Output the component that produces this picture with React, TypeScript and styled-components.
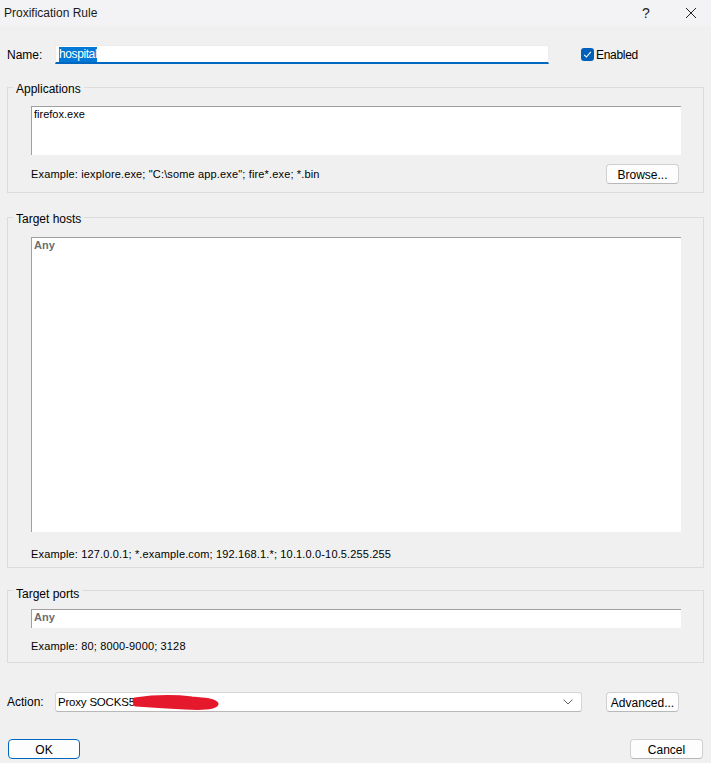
import React from "react";
import styled, { createGlobalStyle } from "styled-components";

const Global = createGlobalStyle`
  html, body { margin: 0; padding: 0; background: #f0f0f0; }
  body { font-family: "Liberation Sans", Arial, sans-serif; color: #000; }
`;

const Window = styled.div`
  width: 711px;
  height: 763px;
  background: #f0f0f0;
  display: flex;
  flex-direction: column;
  overflow: hidden;
`;

const TitleBar = styled.div`
  height: 26px;
  flex: none;
  background: #f3f3f5;
  display: flex;
  align-items: center;
  padding-left: 4px;
`;

const Title = styled.div`
  font-size: 12px;
  flex: 1;
  color: #1a1a1a;
`;

const TitleButton = styled.div<{ $w: number }>`
  width: ${(p) => p.$w}px;
  height: 26px;
  display: flex;
  align-items: center;
  justify-content: center;
  font-size: 14px;
  color: #222;
`;

const Body = styled.div`
  padding: 0 7px;
  display: flex;
  flex-direction: column;
`;

const NameRow = styled.div`
  margin-top: 19px;
  height: 19px;
  display: flex;
  align-items: center;
`;

const Label = styled.div`
  width: 48px;
  font-size: 12px;
  flex: none;
`;

const NameInput = styled.div`
  width: 494px;
  height: 19px;
  box-sizing: border-box;
  background: #fff;
  border: 1px solid #ececec;
  border-bottom: 2px solid #0067c0;
  padding-left: 3px;
  display: flex;
  align-items: center;
  font-size: 12px;
`;

const Selected = styled.span`
  background: #0078d7;
  color: #fff;
  line-height: 15px;
  letter-spacing: -0.4px;
`;

const CheckLabel = styled.label`
  margin-left: 32px;
  display: flex;
  align-items: center;
  gap: 2px;
  font-size: 12px;
  letter-spacing: -0.3px;
`;

const CheckBox = styled.span`
  width: 13px;
  height: 13px;
  border-radius: 3px;
  background: #005fb8;
  display: flex;
  align-items: center;
  justify-content: center;
`;

const Group = styled.fieldset<{ $top: number }>`
  margin: ${(p) => p.$top}px 0 0 0;
  padding: 0 22px 0 5px;
  border: 1px solid #dcdcdc;
  min-width: 0;
`;

const Legend = styled.legend<{ $drop: number }>`
  padding: ${(p) => p.$drop}px 3px 0 3px;
  font-size: 12px;
  line-height: 14px;
`;

const GroupContent = styled.div<{ $pt: number; $pb: number }>`
  padding: ${(p) => p.$pt}px 0 ${(p) => p.$pb}px 18px;
  display: flex;
  flex-direction: column;
`;

const TextBox = styled.div<{ $h: number }>`
  height: ${(p) => p.$h}px;
  box-sizing: border-box;
  background: #fff;
  border-top: 1px solid #a0a0a0;
  border-left: 1px solid #a0a0a0;
  padding: 1px 2px;
  font-size: 11px;
  line-height: 13px;
`;

const Placeholder = styled.span`
  font-weight: bold;
  color: #6d6d6d;
`;

const ExampleRow = styled.div<{ $mt: number; $h: number }>`
  margin-top: ${(p) => p.$mt}px;
  height: ${(p) => p.$h}px;
  display: flex;
  align-items: center;
  justify-content: space-between;
  padding-right: 2px;
`;

const Example = styled.div`
  font-size: 11px;
  line-height: 14px;
  letter-spacing: 0.15px;
`;

const Button = styled.button<{ $w: number; $primary?: boolean }>`
  width: ${(p) => p.$w}px;
  height: 20px;
  box-sizing: border-box;
  padding: 1px 0 0 0;
  background: #fdfdfd;
  border: 1px solid ${(p) => (p.$primary ? "#0067c0" : "#d0d0d0")};
  border-bottom-color: ${(p) => (p.$primary ? "#0067c0" : "#b8b8b8")};
  border-radius: 4px;
  font-family: "Liberation Sans", Arial, sans-serif;
  font-size: 12px;
  color: #000;
`;

const ActionRow = styled.div`
  margin-top: 29px;
  height: 20px;
  display: flex;
  align-items: center;
`;

const Select = styled.div`
  position: relative;
  width: 527px;
  height: 20px;
  box-sizing: border-box;
  background: #fff;
  border: 1px solid #d6d6d6;
  border-bottom-color: #b8b8b8;
  border-radius: 3px;
  display: flex;
  align-items: center;
  padding: 0 8px 0 2px;
  font-size: 11.5px;
  letter-spacing: -0.2px;
  margin-right: 24px;
`;

const SelectText = styled.span`
  flex: 1;
`;

const Scribble = styled.svg`
  position: absolute;
  left: 74px;
  top: 1px;
`;

const Footer = styled.div`
  margin-top: 27px;
  display: flex;
  justify-content: space-between;
  padding: 0 1px;
`;

export default function App() {
  return (
    <>
      <Global />
      <Window>
        <TitleBar>
          <Title>Proxification Rule</Title>
          <TitleButton $w={50}>?</TitleButton>
          <TitleButton $w={40}>
            <svg width="12" height="12" viewBox="0 0 12 12">
              <path d="M1 1 L11 11 M11 1 L1 11" stroke="#222" strokeWidth="1" fill="none" />
            </svg>
          </TitleButton>
        </TitleBar>
        <Body>
          <NameRow>
            <Label>Name:</Label>
            <NameInput>
              <Selected>hospital</Selected>
            </NameInput>
            <CheckLabel>
              <CheckBox>
                <svg width="9" height="9" viewBox="0 0 9 9">
                  <path d="M1.2 4.8 L3.4 7 L7.8 1.8" stroke="#fff" strokeWidth="1.1" fill="none" />
                </svg>
              </CheckBox>
              Enabled
            </CheckLabel>
          </NameRow>

          <Group $top={15}>
            <Legend $drop={3}>Applications</Legend>
            <GroupContent $pt={10} $pb={8}>
              <TextBox $h={49}>firefox.exe</TextBox>
              <ExampleRow $mt={9} $h={20}>
                <Example>Example: iexplore.exe; "C:\some app.exe"; fire*.exe; *.bin</Example>
                <Button $w={73}>Browse...</Button>
              </ExampleRow>
            </GroupContent>
          </Group>

          <Group $top={16}>
            <Legend $drop={3}>Target hosts</Legend>
            <GroupContent $pt={11} $pb={6}>
              <TextBox $h={295}>
                <Placeholder>Any</Placeholder>
              </TextBox>
              <ExampleRow $mt={15} $h={14}>
                <Example>Example: 127.0.0.1; *.example.com; 192.168.1.*; 10.1.0.0-10.5.255.255</Example>
              </ExampleRow>
            </GroupContent>
          </Group>

          <Group $top={11}>
            <Legend $drop={8}>Target ports</Legend>
            <GroupContent $pt={8} $pb={9}>
              <TextBox $h={19}>
                <Placeholder>Any</Placeholder>
              </TextBox>
              <ExampleRow $mt={11} $h={14}>
                <Example>Example: 80; 8000-9000; 3128</Example>
              </ExampleRow>
            </GroupContent>
          </Group>

          <ActionRow>
            <Label>Action:</Label>
            <Select>
              <SelectText>Proxy SOCKS5</SelectText>
              <Scribble width="92" height="18" viewBox="0 0 92 18">
                <path
                  d="M5 6 C 25 3, 45 3, 62 5 C 75 6, 84 7, 86 10 C 84 14, 70 14, 55 13 C 40 12, 20 11, 6 10"
                  stroke="#e5192c"
                  strokeWidth="5"
                  strokeLinecap="round"
                  strokeLinejoin="round"
                  fill="#e5192c"
                />
              </Scribble>
              <svg width="10" height="6" viewBox="0 0 10 6">
                <path d="M0.5 0.5 L5 5 L9.5 0.5" stroke="#606060" strokeWidth="1" fill="none" />
              </svg>
            </Select>
            <Button $w={73}>Advanced...</Button>
          </ActionRow>

          <Footer>
            <Button $w={72} $primary>OK</Button>
            <Button $w={73}>Cancel</Button>
          </Footer>
        </Body>
      </Window>
    </>
  );
}
